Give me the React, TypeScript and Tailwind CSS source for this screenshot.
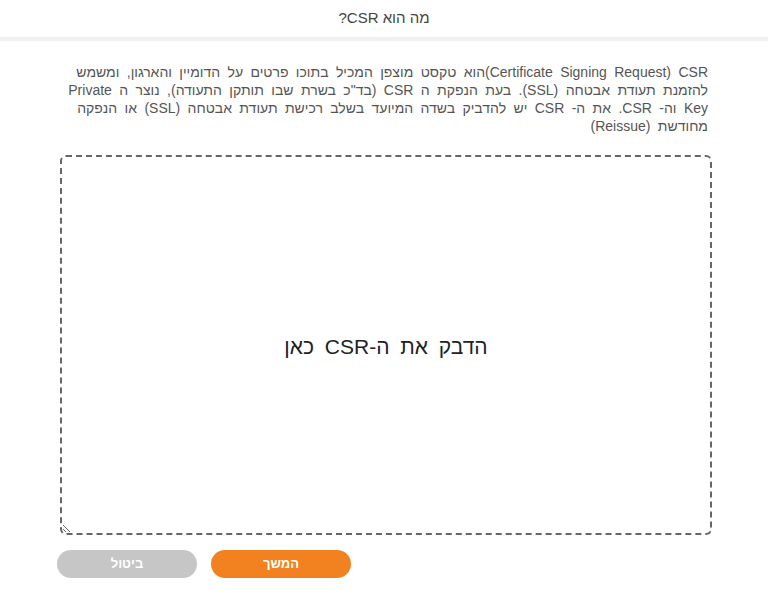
export default function App() {
  return (
    <div
      dir="rtl"
      className="w-[768px] h-[603px] bg-white text-[#555]"
      style={{ fontFamily: '"Liberation Sans", Arial, sans-serif' }}
    >
      <div className="h-[37px] flex items-center justify-center text-[15px] text-[#444]">
        מה הוא CSR?
      </div>
      <div className="h-[4px] bg-[#f0f0f0]" />

      <div className="pl-[60px] pr-[56px] pt-[22px]">
        <p className="pr-[4px] text-[14px] leading-[18px] text-[#555] [word-spacing:3.5px]">
          CSR <bdi>(Certificate Signing Request)</bdi>הוא טקסט מוצפן המכיל בתוכו פרטים על הדומיין והארגון, ומשמש
          <br />
          להזמנת תעודת אבטחה (SSL). בעת הנפקת ה CSR (בד"כ בשרת שבו תותקן התעודה), נוצר ה Private
          <br />
          Key וה- CSR. את ה- CSR יש להדביק בשדה המיועד בשלב רכישת תעודת אבטחה (SSL) או הנפקה
          <br />
          מחודשת (Reissue)
        </p>

        <textarea
          dir="rtl"
          placeholder="הדבק את ה-CSR כאן"
          className="mt-[20px] block w-full h-[380px] border-2 border-dashed border-[#666] rounded-md pt-[178px] px-4 text-center text-[21px] leading-[24px] [word-spacing:5px] text-[#222] placeholder:text-[#222] outline-none resize"
        />

        <div className="mt-[15px] -ml-[3px] flex gap-[14px] justify-end">
          <button className="w-[140px] h-[28px] rounded-full bg-[#f28220] text-white text-[13px] font-bold">
            המשך
          </button>
          <button className="w-[140px] h-[28px] rounded-full bg-[#c6c6c6] text-white text-[13px] font-bold">
            ביטול
          </button>
        </div>
      </div>
    </div>
  );
}
